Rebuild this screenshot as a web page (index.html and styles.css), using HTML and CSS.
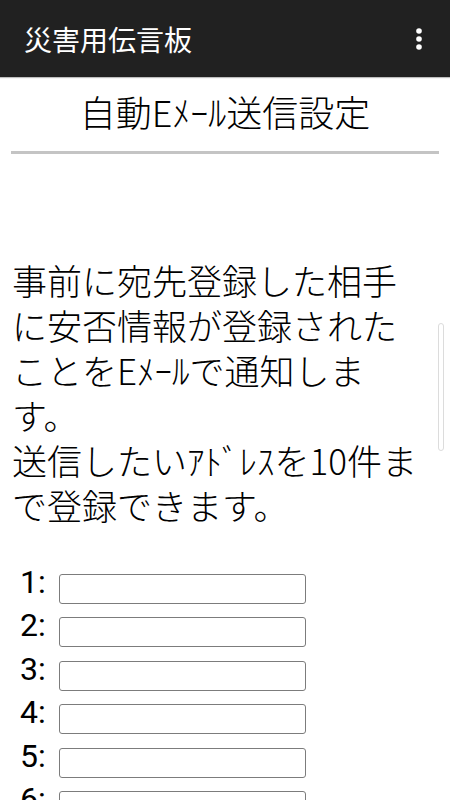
FILE: index.html
```html
<!DOCTYPE html>
<html lang="ja">
<head>
<meta charset="utf-8">
<title>災害用伝言板</title>
<link rel="stylesheet" href="styles.css">
</head>
<body>
<header class="appbar">
  <div class="app-title">災害用伝言板</div>
  <div class="menu" aria-label="メニュー">
    <svg width="8" height="24" viewBox="0 0 8 24">
      <circle cx="4" cy="4" r="2.8" fill="#fff"/>
      <circle cx="4" cy="12" r="2.8" fill="#fff"/>
      <circle cx="4" cy="20" r="2.8" fill="#fff"/>
    </svg>
  </div>
</header>
<main class="content">
  <h1 class="page-title">自動Eﾒｰﾙ送信設定</h1>
  <div class="divider"></div>
  <p class="description">事前に宛先登録した相手に安否情報が登録されたことをEﾒｰﾙで通知します。<br>送信したいｱﾄﾞﾚｽを10件まで登録できます。</p>
  <div class="form">
    <div class="row"><span class="num">1:</span><input class="field" type="text"></div>
    <div class="row"><span class="num">2:</span><input class="field" type="text"></div>
    <div class="row"><span class="num">3:</span><input class="field" type="text"></div>
    <div class="row"><span class="num">4:</span><input class="field" type="text"></div>
    <div class="row"><span class="num">5:</span><input class="field" type="text"></div>
    <div class="row"><span class="num">6:</span><input class="field" type="text"></div>
  </div>
</main>
<div class="scroll-indicator"></div>
</body>
</html>
```
FILE: styles.css
```css
html, body {
  margin: 0;
  padding: 0;
  height: 800px;
  overflow: hidden;
  background: #fff;
}
body {
  font-family: "Noto Sans CJK JP", "Noto Sans", sans-serif;
  font-weight: 300;
  color: #000;
  position: relative;
}
.appbar {
  height: 77px;
  background: #212121;
  display: flex;
  align-items: center;
  justify-content: space-between;
  padding: 0 27px 0 24px;
  box-shadow: 0 1px 1px rgba(0, 0, 0, 0.25);
}
.app-title {
  color: #fff;
  font-size: 28px;
  font-weight: normal;
  line-height: 1;
}
.menu {
  display: flex;
  align-items: center;
}
.menu svg {
  display: block;
}
.content {
  padding: 0 11px;
}
.page-title {
  margin: 11px 0 0;
  font-size: 36px;
  font-weight: 300;
  line-height: 46px;
  text-align: center;
}
.divider {
  margin-top: 17px;
  height: 3px;
  background: #c4c4c4;
}
.description {
  margin: 103px 0 0;
  padding-left: 1px;
  width: 414px;
  font-size: 35px;
  line-height: 45px;
}
.form {
  margin-top: 47px;
  padding-left: 9px;
}
.row {
  height: 43.4px;
  display: flex;
  align-items: flex-start;
}
.num {
  width: 39px;
  font-family: Roboto, "Noto Sans", sans-serif;
  font-weight: normal;
  font-size: 32px;
  line-height: 32px;
  margin-top: -8px;
}
.field {
  box-sizing: border-box;
  width: 247px;
  height: 30px;
  margin: 0;
  padding: 0 4px;
  border: 1px solid #7c7c7c;
  border-radius: 3px;
  background: #fff;
  outline: none;
}
.scroll-indicator {
  position: absolute;
  left: 438px;
  top: 323px;
  width: 4px;
  height: 126px;
  border: 1px solid #dcdcdc;
  border-radius: 3px;
}
```
